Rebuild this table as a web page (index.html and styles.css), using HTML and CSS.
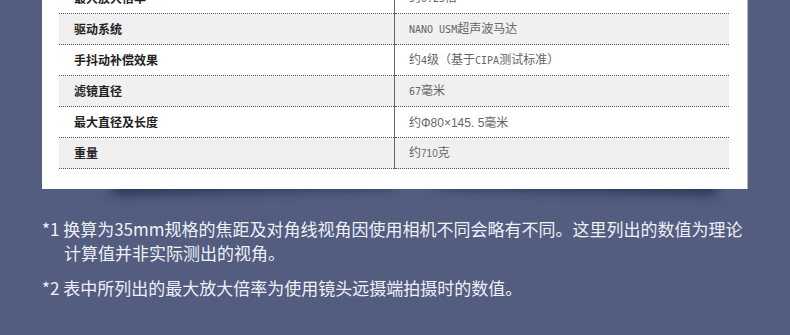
FILE: index.html
```html
<!DOCTYPE html>
<html lang="zh-CN">
<head>
<meta charset="utf-8">
<title>规格</title>
<link rel="stylesheet" href="styles.css">
</head>
<body>
<div class="page">
  <div class="card">
    <table class="spec">
      <tr><td class="k">最大放大倍率</td><td class="v">约<span class="m">0.25</span>倍</td></tr>
      <tr class="alt"><td class="k">驱动系统</td><td class="v"><span class="m">NANO USM</span>超声波马达</td></tr>
      <tr><td class="k">手抖动补偿效果</td><td class="v">约<span class="m">4</span>级（基于<span class="m">CIPA</span>测试标准）</td></tr>
      <tr class="alt"><td class="k">滤镜直径</td><td class="v"><span class="m">67</span>毫米</td></tr>
      <tr><td class="k">最大直径及长度</td><td class="v">约<span class="b">Φ80×145. 5</span>毫米</td></tr>
      <tr class="alt"><td class="k">重量</td><td class="v">约<span class="a">710</span>克</td></tr>
    </table>
  </div>
  <div class="notes">
    <p class="note">*1 换算为35mm规格的焦距及对角线视角因使用相机不同会略有不同。这里列出的数值为理论计算值并非实际测出的视角。</p>
    <p class="note">*2 表中所列出的最大放大倍率为使用镜头远摄端拍摄时的数值。</p>
  </div>
</div>
</body>
</html>
```

FILE: styles.css
```css
html, body {
  margin: 0;
  padding: 0;
}
body {
  background: #525d80;
  overflow: hidden;
  font-family: "Noto Sans CJK SC", sans-serif;
}
.page {
  padding: 0 42px;
}
.card {
  position: relative;
  background: #fff;
  margin-top: -17px;
  padding: 0 18px 20px 17px;
  border-right: 1px solid #b4b8c6;
}
.card::before,
.card::after {
  content: "";
  position: absolute;
  bottom: 6px;
  width: 40%;
  height: 14px;
  z-index: -1;
  box-shadow: 0 8px 12px rgba(28, 38, 70, 0.75);
}
.card::before {
  left: 70px;
  transform: rotate(-1.5deg);
}
.card::after {
  right: 30px;
  transform: rotate(1.5deg);
}
.spec {
  width: 100%;
  border-collapse: collapse;
  font-size: 12px;
}
.spec td {
  height: 30px;
  padding: 0;
  border-bottom: 1px dotted #555;
  vertical-align: middle;
  line-height: 16px;
}
.spec tr.alt td {
  background: #f0f0f0;
}
.spec td.k {
  width: 320px;
  padding-left: 15px;
  border-right: 1px solid #666;
  font-weight: 700;
  color: #222;
}
.spec td.v {
  padding-left: 14px;
  color: #666;
}
.m {
  font-family: "DejaVu Sans Mono", monospace;
  font-size: 10px;
}
.a {
  font-family: "Liberation Sans", sans-serif;
  font-size: 10px;
}
.b {
  font-family: "Liberation Sans", sans-serif;
  font-size: 12px;
}
.notes {
  padding-top: 28px;
  color: #eef0f5;
  font-size: 17px;
}
.note {
  margin: 0 0 11px;
  padding-left: 22px;
  text-indent: -22px;
  line-height: 24px;
}
```
